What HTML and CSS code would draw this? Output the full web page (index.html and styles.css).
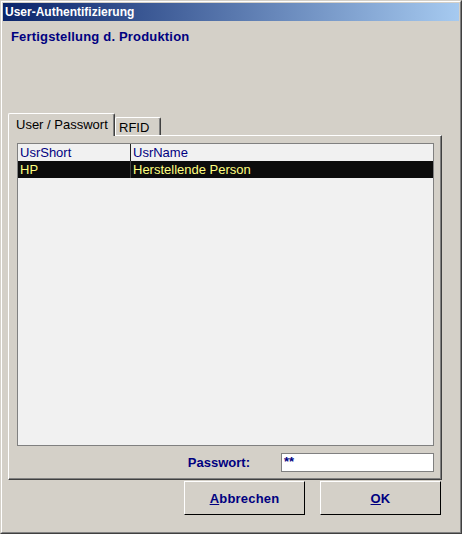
FILE: index.html
```html
<!DOCTYPE html>
<html>
<head>
<meta charset="utf-8">
<link rel="stylesheet" href="styles.css">
</head>
<body>
<div class="window">
  <div class="frame">
    <div class="titlebar">User-Authentifizierung</div>
    <div class="subtitle">Fertigstellung d. Produktion</div>
    <div class="tabctl">
      <div class="tabs">
        <div class="tab active">User / Passwort</div>
        <div class="tab">RFID</div>
      </div>
      <div class="panel">
        <div class="listview">
          <div class="lv-row lv-head">
            <div class="cell c1">UsrShort</div>
            <div class="cell c2">UsrName</div>
          </div>
          <div class="lv-row lv-sel">
            <div class="cell c1">HP</div>
            <div class="cell c2">Herstellende Person</div>
          </div>
        </div>
        <div class="pwrow">
          <span class="pwlabel">Passwort:</span>
          <div class="pwinput">**</div>
        </div>
      </div>
    </div>
    <div class="buttons">
      <div class="btn"><u>A</u>bbrechen</div>
      <div class="btn"><u>O</u>K</div>
    </div>
  </div>
</div>
</body>
</html>
```
FILE: styles.css
```css
html, body {
  margin: 0;
  padding: 0;
  background: #d4d0c8;
}
body {
  font-family: "Liberation Sans", Arial, sans-serif;
  font-size: 13px;
}
.window {
  width: 462px;
  height: 534px;
  box-sizing: border-box;
  border: 1px solid;
  border-color: #d4d0c8 #404040 #404040 #d4d0c8;
  background: #d4d0c8;
}
.frame {
  height: 100%;
  box-sizing: border-box;
  border: 1px solid;
  border-color: #ffffff #808080 #808080 #ffffff;
  padding: 1px;
  display: flex;
  flex-direction: column;
}
.titlebar {
  height: 18px;
  line-height: 18px;
  padding-left: 2px;
  background: linear-gradient(to right, #0a246a, #a6caf0);
  color: #ffffff;
  font-weight: bold;
  font-size: 12px;
  white-space: nowrap;
}
.subtitle {
  margin: 8px 0 0 8px;
  line-height: 16px;
  font-weight: bold;
  font-size: 13px;
  letter-spacing: 0.18px;
  color: #000080;
}
.tabctl {
  margin: 68px 17px 0 5px;
}
.tabs {
  height: 22px;
  display: flex;
  align-items: flex-end;
}
.tab {
  box-sizing: border-box;
  background: #d4d0c8;
  color: #000000;
  border-top: 1px solid #ffffff;
  border-left: 1px solid #ffffff;
  border-right: 1px solid #404040;
  box-shadow: inset -1px 0 #808080;
  border-top-left-radius: 2px;
  border-top-right-radius: 2px;
  white-space: nowrap;
}
.tab.active {
  width: 107px;
  height: 23px;
  margin-bottom: -1px;
  padding: 3px 0 0 7px;
  line-height: 16px;
  position: relative;
  z-index: 1;
}
.tab:not(.active) {
  width: 46px;
  height: 18px;
  padding: 2px 0 0 3px;
  line-height: 15px;
}
.panel {
  height: 345px;
  box-sizing: border-box;
  border: 1px solid;
  border-color: #ffffff #404040 #404040 #ffffff;
  box-shadow: inset -1px -1px #808080;
  padding: 7px 7px 7px 8px;
  display: flex;
  flex-direction: column;
}
.listview {
  height: 303px;
  box-sizing: border-box;
  border: 1px solid #808080;
  background: #f1f1f1;
}
.lv-row {
  display: flex;
  height: 17px;
  line-height: 17px;
  white-space: nowrap;
}
.cell {
  box-sizing: border-box;
}
.c1 {
  width: 113px;
  padding-left: 2px;
}
.c2 {
  padding-left: 2px;
}
.lv-head {
  color: #000080;
}
.lv-head .c1 {
  border-right: 1px solid #202020;
}
.lv-sel {
  background: #0c0c0c;
  color: #ffff80;
}
.lv-sel .cell {
  padding-top: 1px;
  line-height: 16px;
}
.lv-sel .c1 {
  border-right: 1px solid #404040;
}
.pwrow {
  margin-top: 7px;
  display: flex;
  justify-content: flex-end;
  align-items: center;
  height: 19px;
}
.pwlabel {
  color: #000080;
  font-weight: bold;
  margin-right: 31px;
  line-height: 16px;
}
.pwinput {
  width: 153px;
  height: 19px;
  box-sizing: border-box;
  border: 1px solid #808080;
  background: #ffffff;
  color: #000080;
  font-weight: bold;
  line-height: 15px;
  padding-left: 2px;
}
.buttons {
  margin: 1px 18px 0 0;
  display: flex;
  justify-content: flex-end;
  gap: 15px;
}
.btn {
  width: 121px;
  height: 34px;
  box-sizing: border-box;
  border: 1px solid;
  border-color: #ffffff #000000 #000000 #ffffff;
  display: flex;
  align-items: center;
  justify-content: center;
  color: #000080;
  font-weight: bold;
  font-size: 13px;
  letter-spacing: 0.2px;
}
.btn u {
  text-decoration: underline;
}
```
